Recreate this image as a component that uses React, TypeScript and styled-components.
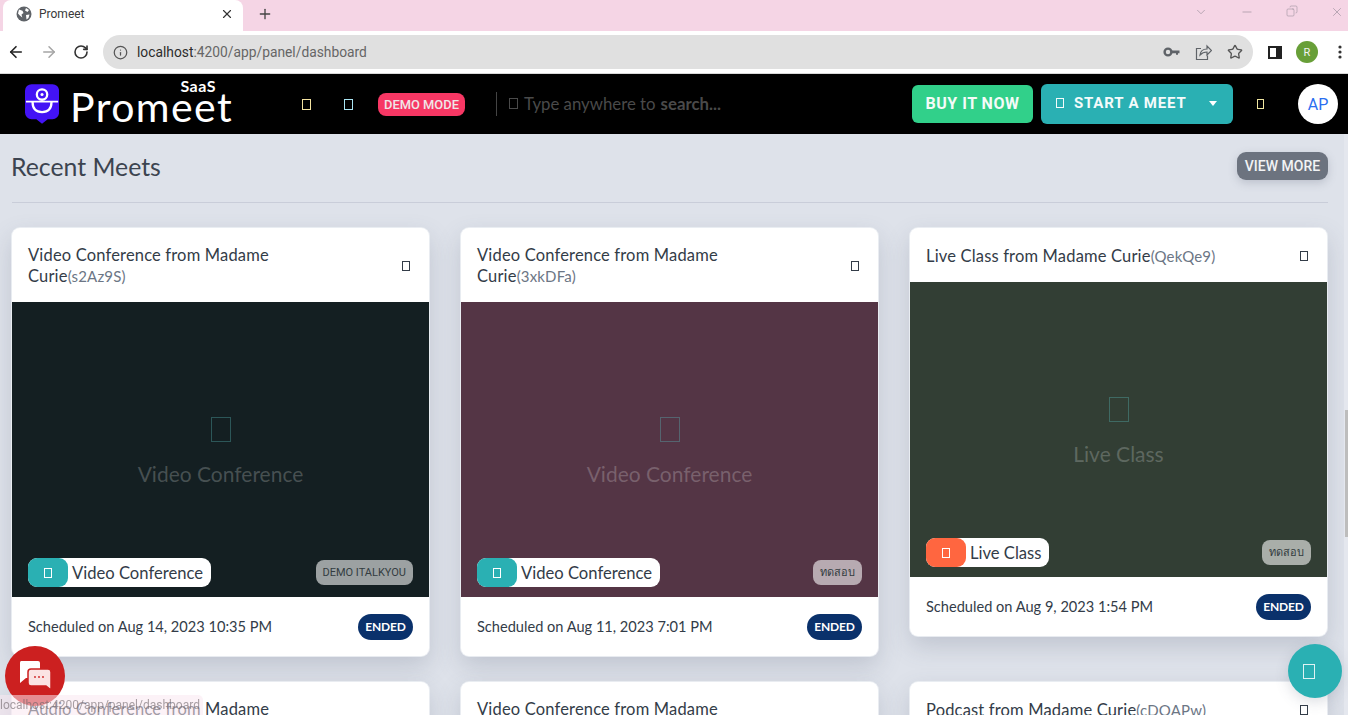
import React from 'react';
import styled, { createGlobalStyle } from 'styled-components';
import {
  ArrowLeft,
  ArrowRight,
  RotateCw,
  Info,
  Star,
  ChevronDown,
  Minus,
  X,
  Plus,
  Copy,
} from 'lucide-react';

const GlobalStyle = createGlobalStyle`
  html, body {
    margin: 0;
    height: 100%;
    overflow: hidden;
    background: #dee2ea;
  }
  * { box-sizing: border-box; }
  #root {
    height: 715px;
    overflow: hidden;
    font-family: Lato, "Noto Sans", sans-serif;
  }
`;

const TEAL = '#2ab0b3';

// missing icon-font glyph, the page shows empty boxes
const Tofu = styled.span<{ $w: number; $h: number; $color?: string }>`
  display: inline-block;
  flex: none;
  width: ${(p) => p.$w}px;
  height: ${(p) => p.$h}px;
  border: 1px solid ${(p) => p.$color || 'currentColor'};
`;

const TabStrip = styled.div`
  display: flex;
  align-items: flex-end;
  height: 31px;
  padding-left: 3px;
  background: #f5d5e5;
`;

const Tab = styled.div`
  display: flex;
  align-items: center;
  width: 240px;
  height: 31px;
  padding: 0 9px 3px 13px;
  background: #fff;
  border-radius: 8px 8px 0 0;
  color: #3a3a3a;
  font: 12px Roboto, sans-serif;
`;

const TabTitle = styled.span`
  flex: 1;
  margin-left: 7px;
`;

const NewTab = styled.div`
  display: flex;
  margin: 0 0 9px 14px;
  color: #444;
`;

const WindowControls = styled.div`
  display: flex;
  gap: 32px;
  align-self: flex-start;
  margin: 5px 4px 0 auto;
  color: #8d8590;
`;

const Toolbar = styled.div`
  display: flex;
  align-items: center;
  height: 43px;
  padding: 4px 0 4px 7px;
  background: #fff;
  border-bottom: 1px solid #d8d8d8;
  color: #333;
`;

const NavButtons = styled.div`
  display: flex;
  gap: 15px;
  width: 96px;
`;

const AddressBar = styled.div`
  display: flex;
  align-items: center;
  width: 1150px;
  height: 34px;
  padding: 0 10px 0 10px;
  background: #e0e0e0;
  border-radius: 17px;
  font: 13.8px Roboto, sans-serif;
  color: #666;
`;

const Url = styled.span`
  flex: 1;
  margin-left: 9px;
  b {
    font-weight: 400;
    color: #2c2c2c;
  }
`;

const AddressIcons = styled.div`
  display: flex;
  align-items: center;
  gap: 15px;
  color: #5f6368;
`;

const ToolbarRight = styled.div`
  display: flex;
  align-items: center;
  margin-left: 15px;
`;

const ProfileDot = styled.div`
  display: flex;
  align-items: center;
  justify-content: center;
  width: 22px;
  height: 22px;
  margin: 0 20px 0 14px;
  border-radius: 50%;
  background: #689f38;
  color: #f3f3f3;
  font: 11px Roboto, sans-serif;
`;

const AppHeader = styled.header`
  display: flex;
  align-items: center;
  height: 60px;
  padding: 0 10px 0 25px;
  background: #000;
  color: #fff;
`;

const Logo = styled.div`
  display: flex;
  align-items: center;
  flex: none;
  width: 208px;
  height: 44px;
`;

const Wordmark = styled.div`
  position: relative;
  margin-left: 11px;
  padding-top: 5px;
  font: 400 41px/1 Lato, sans-serif;
  letter-spacing: 1.4px;
`;

const SaasMark = styled.span`
  position: absolute;
  top: -3px;
  right: 17px;
  font: 700 16px/1 Lato, sans-serif;
  letter-spacing: 0.5px;
`;

const HeaderIcons = styled.div`
  display: flex;
  gap: 33px;
  margin-left: 69px;
`;

const DemoPill = styled.span`
  margin-left: 25px;
  padding: 4px 6px;
  height: 23px;
  background: #f73764;
  border-radius: 8px;
  color: #f0e6e8;
  font: 500 12.9px/15px Roboto, sans-serif;
  white-space: nowrap;
`;

const SearchHint = styled.div`
  display: flex;
  align-items: center;
  height: 24px;
  margin-left: 31px;
  padding: 0 0 1px 12px;
  border-left: 1px solid #444;
  color: #4a4a4a;
  font-size: 16.8px;
  b {
    margin-left: 5px;
  }
`;

const HintText = styled.span`
  margin-left: 6px;
`;

const BuyButton = styled.button`
  height: 38px;
  margin-left: auto;
  padding: 0 0 2px;
  width: 121px;
  border: 0;
  border-radius: 6px;
  background: #31d08a;
  color: #f4fbf8;
  font: 700 16px Roboto, sans-serif;
  letter-spacing: 0.5px;
`;

const StartButton = styled.button`
  display: flex;
  align-items: center;
  width: 192px;
  height: 40px;
  margin-left: 8px;
  padding: 0 16px 2px 15px;
  border: 0;
  border-radius: 6px;
  background: ${TEAL};
  color: #f4fbfb;
  font: 700 15px Roboto, sans-serif;
  letter-spacing: 0.8px;
`;

const StartLabel = styled.span`
  flex: 1;
  margin-left: 10px;
  text-align: left;
`;

const Caret = styled.span`
  width: 0;
  height: 0;
  border: 4px solid transparent;
  border-top: 5px solid #fff;
  border-bottom: 0;
`;

const BellSlot = styled.span`
  display: flex;
  margin: 0 34px 0 24px;
`;

const Avatar = styled.div`
  display: flex;
  align-items: center;
  justify-content: center;
  width: 40px;
  height: 40px;
  border-radius: 50%;
  background: #fff;
  color: #2a6ef0;
  font: 16px Roboto, sans-serif;
`;

const Page = styled.main`
  padding: 0 20px 0 12px;
`;

const SectionHead = styled.div`
  display: flex;
  align-items: center;
  justify-content: space-between;
  height: 69px;
  border-bottom: 1px solid #c9cdd9;
`;

const SectionTitle = styled.h2`
  margin: 0 0 4px -1px;
  font-size: 24.8px;
  font-weight: 400;
  color: #3c4450;
`;

const ViewMore = styled.button`
  width: 91px;
  height: 28px;
  margin-bottom: 4px;
  padding: 0 0 1px;
  border: 0;
  border-radius: 9px;
  background: #6c737f;
  color: #f2f3f5;
  font: 500 14px Roboto, sans-serif;
  box-shadow: 0 3px 8px rgba(90, 100, 120, 0.25);
`;

const CardGrid = styled.div`
  display: grid;
  grid-template-columns: repeat(3, 417px);
  gap: 26px 32px;
  align-items: start;
  margin-top: 25px;
`;

const Card = styled.article`
  background: #fff;
  border-radius: 8px;
  box-shadow: 0 0 0 1px rgba(235, 238, 243, 0.9), 0 10px 24px rgba(80, 90, 115, 0.22);
  overflow: hidden;
`;

const CardHead = styled.div`
  display: flex;
  align-items: center;
  justify-content: space-between;
  min-height: 54px;
  padding: 17px 19px 15px 16px;
  color: #333c48;
`;

const CardTitle = styled.div`
  max-width: 290px;
  font-size: 16.5px;
  line-height: 21px;
  letter-spacing: 0.17px;
  span {
    color: #6c7685;
    font-size: 15px;
  }
`;

const Cover = styled.div<{ $bg: string }>`
  position: relative;
  display: flex;
  flex-direction: column;
  align-items: center;
  justify-content: center;
  gap: 19px;
  height: 295px;
  padding-top: 3px;
  background: ${(p) => p.$bg};
  color: rgba(255, 255, 255, 0.22);
  font-size: 21px;
`;

const TypePill = styled.div`
  position: absolute;
  left: 16px;
  bottom: 10px;
  display: flex;
  align-items: center;
  height: 29px;
  padding: 0 8px 0 0;
  background: #fff;
  border-radius: 9px;
  color: #333c48;
  font-size: 16.6px;
`;

const TypeIcon = styled.span<{ $bg: string }>`
  display: flex;
  align-items: center;
  justify-content: center;
  width: 40px;
  height: 29px;
  margin-right: 4px;
  border-radius: 9px;
  background: ${(p) => p.$bg};
  color: #fff;
`;

const OwnerTag = styled.span`
  position: absolute;
  right: 16px;
  bottom: 12px;
  height: 25px;
  padding: 0 7px;
  border-radius: 8px;
  background: rgba(255, 255, 255, 0.58);
  color: #333c40;
  font: 11px/25px Roboto, "Noto Sans", sans-serif;
`;

const CardFoot = styled.div`
  display: flex;
  align-items: center;
  justify-content: space-between;
  height: 59px;
  padding: 0 16px;
  color: #333c48;
  font-size: 14.6px;
`;

const StatusPill = styled.span`
  width: 55px;
  height: 26px;
  border-radius: 13px;
  background: #0a316b;
  color: #fff;
  font-size: 12px;
  font-weight: 700;
  letter-spacing: -0.2px;
  line-height: 26px;
  text-align: center;
`;

const ChatBubble = styled.div`
  position: fixed;
  left: 5px;
  top: 646px;
  display: flex;
  align-items: center;
  justify-content: center;
  width: 60px;
  height: 60px;
  border-radius: 50%;
  background: #cc2020;
`;

const HelpFab = styled.div`
  position: fixed;
  left: 1288px;
  top: 644px;
  display: flex;
  align-items: center;
  justify-content: center;
  width: 54px;
  height: 54px;
  padding-right: 12px;
  border-radius: 50%;
  background: ${TEAL};
  color: #dff3f3;
  box-shadow: 0 4px 14px rgba(80, 90, 115, 0.2);
`;

const StatusTip = styled.div`
  position: fixed;
  left: 0;
  bottom: 0;
  width: 203px;
  height: 20px;
  padding: 2px 0 0 0;
  background: rgba(250, 232, 240, 0.55);
  border-top-right-radius: 5px;
  color: rgba(110, 100, 105, 0.6);
  font: 12px/16px Roboto, sans-serif;
  white-space: nowrap;
`;

const ScrollTrack = styled.div`
  position: fixed;
  top: 134px;
  right: 0;
  width: 4px;
  height: 581px;
  background: #e4e7ee;
`;

const ScrollThumb = styled.div`
  position: absolute;
  top: 276px;
  right: 0;
  width: 3px;
  height: 127px;
  background: #bdbdbd;
`;

const meets = [
  { title: 'Video Conference from Madame Curie', code: 's2Az9S', kind: 'Video Conference', bg: '#141f22', accent: TEAL, owner: 'DEMO ITALKYOU', date: 'Aug 14, 2023 10:35 PM' },
  { title: 'Video Conference from Madame Curie', code: '3xkDFa', kind: 'Video Conference', bg: '#543545', accent: TEAL, owner: 'ทดสอบ', date: 'Aug 11, 2023 7:01 PM' },
  { title: 'Live Class from Madame Curie', code: 'QekQe9', kind: 'Live Class', bg: '#323e34', accent: '#ff6640', owner: 'ทดสอบ', date: 'Aug 9, 2023 1:54 PM' },
  { title: 'Audio Conference from Madame Curie', code: 'hT4mPz', kind: 'Audio Conference', bg: '#141f22', accent: TEAL, owner: 'ทดสอบ', date: 'Aug 8, 2023 4:20 PM' },
  { title: 'Video Conference from Madame Curie', code: 'p9LwQe', kind: 'Video Conference', bg: '#543545', accent: TEAL, owner: 'ทดสอบ', date: 'Aug 7, 2023 2:15 PM' },
  { title: 'Podcast from Madame Curie', code: 'cDQAPw', kind: 'Podcast', bg: '#323e34', accent: '#ff6640', owner: 'ทดสอบ', date: 'Aug 6, 2023 11:00 AM' },
];

function LogoMark() {
  return (
    <svg width="36" height="42" viewBox="0 0 36 42">
      <path d="M7 0h22a7 7 0 0 1 7 7v23a7 7 0 0 1-7 7h-5l-6 5-6-5H7a7 7 0 0 1-7-7V7a7 7 0 0 1 7-7z" fill="#4313f5" />
      <circle cx="18" cy="11" r="5.5" fill="none" stroke="#fff" strokeWidth="2.4" />
      <circle cx="18" cy="11" r="1.6" fill="#fff" />
      <path d="M1 18.5h34" stroke="#fff" strokeWidth="2" />
      <path d="M8 19c0 7 4 10.5 10 10.5S28 26 28 19" fill="none" stroke="#fff" strokeWidth="2.4" />
    </svg>
  );
}

function App() {
  return (
    <>
      <GlobalStyle />
      <TabStrip>
        <Tab>
          <svg width="16" height="16" viewBox="0 0 16 16">
            <circle cx="8" cy="8" r="7.5" fill="#5f6368" />
            <path d="M3 3.5l3.5 1.2 1 2.3-2 1.5.8 3-2.5-2L2 7.5zM10 2l3 2-1.5 2L9 4.5zM10 9l3.5-.5-1 3.5-2 1.5z" fill="#fff" />
          </svg>
          <TabTitle>Promeet</TabTitle>
          <X size={14} strokeWidth={2} color="#333" />
        </Tab>
        <NewTab>
          <Plus size={16} strokeWidth={2} />
        </NewTab>
        <WindowControls>
          <ChevronDown size={14} strokeWidth={1} />
          <Minus size={14} strokeWidth={1} />
          <Copy size={12} strokeWidth={1} style={{ transform: 'scaleX(-1)' }} />
          <X size={14} strokeWidth={1} />
        </WindowControls>
      </TabStrip>
      <Toolbar>
        <NavButtons>
          <ArrowLeft size={18} strokeWidth={2.2} color="#222" />
          <ArrowRight size={18} strokeWidth={2} color="#a5a5a5" />
          <RotateCw size={16} strokeWidth={2.4} color="#333" style={{ marginTop: 1 }} />
        </NavButtons>
        <AddressBar>
          <Info size={15} strokeWidth={2} color="#555" />
          <Url>
            <b>localhost</b>:4200/app/panel/dashboard
          </Url>
          <AddressIcons>
            <svg width="17" height="16" viewBox="0 0 17 16">
              <circle cx="5" cy="8" r="3.4" fill="none" stroke="#5f6368" strokeWidth="2.4" />
              <path d="M8 6.6h8.5v2.6h-1.5v1.6h-2V9.2H8z" fill="#5f6368" />
            </svg>
            <svg width="17" height="17" viewBox="0 0 17 17" fill="none" stroke="#5f6368" strokeWidth="1.2">
              <path d="M6 4.5H1.5v11h11v-4" />
              <path d="M5 11c.5-4 3-6 7-6V2l4.5 4.5L12 11V8c-3 0-5 .8-7 3z" />
            </svg>
            <Star size={16} strokeWidth={2} color="#555" />
          </AddressIcons>
        </AddressBar>
        <ToolbarRight>
          <svg width="14" height="13" viewBox="0 0 14 13">
            <path d="M0 0h14v13H0zM2 2v9h6V2z" fill="#222" fillRule="evenodd" />
          </svg>
          <ProfileDot>R</ProfileDot>
          <svg width="4" height="14" viewBox="0 0 4 14" fill="#333">
            <circle cx="2" cy="2" r="1.6" />
            <circle cx="2" cy="7" r="1.6" />
            <circle cx="2" cy="12" r="1.6" />
          </svg>
        </ToolbarRight>
      </Toolbar>
      <AppHeader>
        <Logo>
          <LogoMark />
          <Wordmark>
            <SaasMark>SaaS</SaasMark>
            Promeet
          </Wordmark>
        </Logo>
        <HeaderIcons>
          <Tofu $w={9} $h={11} $color="#f3e2a0" />
          <Tofu $w={9} $h={11} $color="#a9e4f2" />
        </HeaderIcons>
        <DemoPill>DEMO MODE</DemoPill>
        <SearchHint>
          <Tofu $w={9} $h={11} />
          <HintText>Type anywhere to</HintText>
          <b>search...</b>
        </SearchHint>
        <BuyButton>BUY IT NOW</BuyButton>
        <StartButton>
          <Tofu $w={8} $h={10} />
          <StartLabel>START A MEET</StartLabel>
          <Caret />
        </StartButton>
        <BellSlot>
          <Tofu $w={7} $h={10} $color="#f0e6a0" />
        </BellSlot>
        <Avatar>AP</Avatar>
      </AppHeader>
      <Page>
        <SectionHead>
          <SectionTitle>Recent Meets</SectionTitle>
          <ViewMore>VIEW MORE</ViewMore>
        </SectionHead>
        <CardGrid>
          {meets.map((m) => (
            <Card key={m.code}>
              <CardHead>
                <CardTitle>
                  {m.title}
                  <span>({m.code})</span>
                </CardTitle>
                <Tofu $w={8} $h={10} />
              </CardHead>
              <Cover $bg={m.bg}>
                <Tofu $w={20} $h={25} $color="rgba(90, 190, 190, 0.35)" />
                {m.kind}
                <TypePill>
                  <TypeIcon $bg={m.accent}>
                    <Tofu $w={8} $h={10} />
                  </TypeIcon>
                  {m.kind}
                </TypePill>
                <OwnerTag>{m.owner}</OwnerTag>
              </Cover>
              <CardFoot>
                Scheduled on {m.date}
                <StatusPill>ENDED</StatusPill>
              </CardFoot>
            </Card>
          ))}
        </CardGrid>
      </Page>
      <ScrollTrack>
        <ScrollThumb />
      </ScrollTrack>
      <ChatBubble>
        <svg width="34" height="32" viewBox="0 0 34 32">
          <path d="M3 1h17a2 2 0 0 1 2 2v13a2 2 0 0 1-2 2H8l-6 5V3a2 2 0 0 1 1-2z" fill="#fff" />
          <path d="M13 9h17a3 3 0 0 1 3 3v18l-5-4H13a3 3 0 0 1-3-3V12a3 3 0 0 1 3-3z" fill="#fbe3e3" stroke="#cc2020" strokeWidth="1.5" />
          <circle cx="17" cy="17" r="0.9" fill="#cc2020" />
          <circle cx="21" cy="17" r="0.9" fill="#cc2020" />
          <circle cx="25" cy="17" r="0.9" fill="#cc2020" />
        </svg>
      </ChatBubble>
      <StatusTip>localhost:4200/app/panel/dashboard</StatusTip>
      <HelpFab>
        <Tofu $w={12} $h={15} />
      </HelpFab>
    </>
  );
}

export default App;
